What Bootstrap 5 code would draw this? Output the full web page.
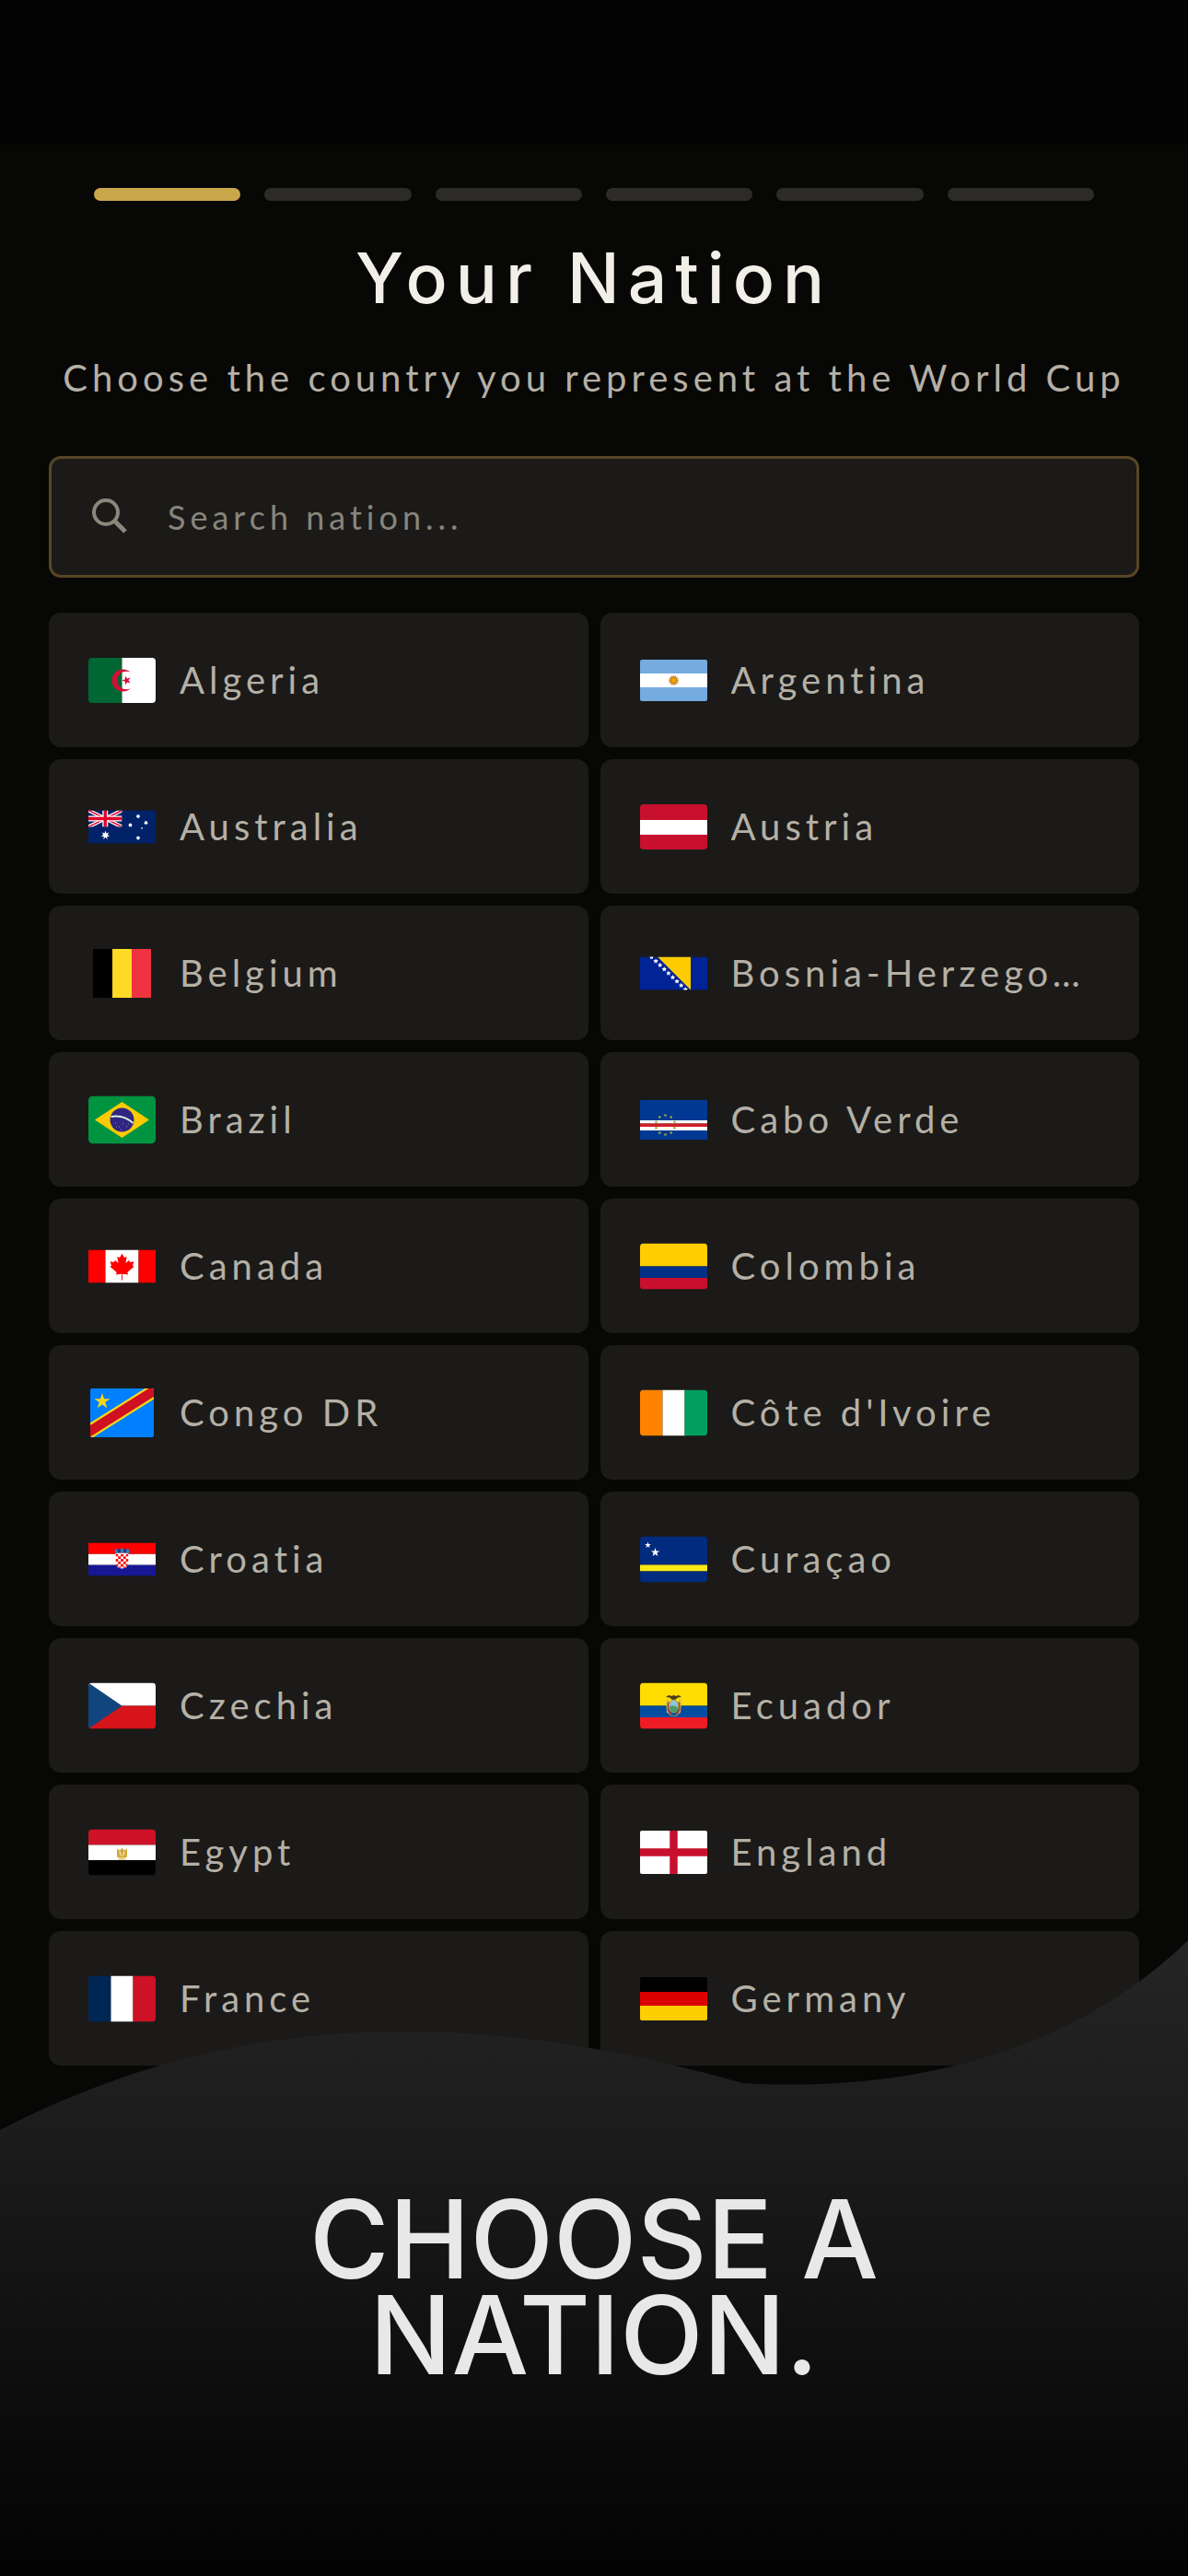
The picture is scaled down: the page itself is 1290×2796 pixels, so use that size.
<!DOCTYPE html>
<html lang="en">

<head>
    <meta charset="UTF-8">
    <meta name="viewport" content="width=device-width, initial-scale=1.0">
    <title>Your Nation</title>
    <link href="https://cdn.jsdelivr.net/npm/bootstrap@5.3.0/dist/css/bootstrap.min.css" rel="stylesheet">
    <style>
        body {
            background: #070706;
            color: #b5b0a6;
            font-family: Lato, sans-serif;
        }

        .screen {
            padding-bottom: 400px;
        }

        .status-strip {
            height: 157px;
            background: #030303;
        }

        .content {
            padding: 47px 53px 0;
        }

        .steps {
            gap: 26px;
            padding: 0 49px;
        }

        .step {
            height: 14px;
            border-radius: 7px;
            background: #2d2b28;
        }

        .step.active {
            background: #c9a84c;
        }

        .page-title {
            margin: 36px 0 0;
            color: #f2efe8;
            font: 500 75px/96px Inter, sans-serif;
            letter-spacing: 9px;
        }

        .page-text {
            margin: 32px -40px 0;
            font-size: 40px;
            line-height: 56px;
            letter-spacing: 5px;
        }

        .search {
            height: 132px;
            margin-top: 57px;
            padding: 0 42px;
            gap: 42px;
            border: 3px solid #574524;
            border-radius: 13px;
            background: #1b1a18;
        }

        .search svg {
            width: 42px;
            height: 42px;
            color: #8b877d;
        }

        .search input {
            font-size: 36px;
            letter-spacing: 5px;
            color: #b5b0a6;
        }

        .search input::placeholder {
            color: #88857c;
            opacity: 1;
        }

        .nations {
            --bs-gutter-x: 13px;
            --bs-gutter-y: 13px;
            margin-top: 25px;
        }

        .nation {
            height: 146px;
            padding: 0 43px;
            gap: 26px;
            border-radius: 13px;
            background: #1b1a18;
            color: #b5b0a6;
            font-size: 40px;
            letter-spacing: 5px;
        }

        .nation:hover {
            background: #242320;
            color: #f2efe8;
        }

        .flag {
            width: 73px;
            height: 53px;
        }

        .promo {
            padding: 278px 0 210px;
        }

        .promo-title {
            color: #e8e8e8;
            font: 500 118px/104px Inter, sans-serif;
        }
    </style>
</head>

<body>
    <div class="screen position-relative overflow-hidden min-vh-100">
        <div class="status-strip"></div>

        <main class="content">
            <div class="steps d-flex">
                <div class="step active flex-fill"></div>
                <div class="step flex-fill"></div>
                <div class="step flex-fill"></div>
                <div class="step flex-fill"></div>
                <div class="step flex-fill"></div>
                <div class="step flex-fill"></div>
            </div>

            <h1 class="page-title text-center">Your Nation</h1>
            <p class="page-text text-center">Choose the country you represent at the World Cup</p>

            <form class="search d-flex align-items-center">
                <label for="nationSearch" class="d-flex" aria-label="Search nation">
                    <svg viewBox="0 0 42 42" fill="none" stroke="currentColor" stroke-width="4">
                        <circle cx="17" cy="16" r="13" />
                        <path d="M26 25l12 12" stroke-width="5" />
                    </svg>
                </label>
                <input type="text" id="nationSearch" class="form-control border-0 bg-transparent shadow-none p-0" placeholder="Search nation...">
            </form>

            <div class="row nations" id="nationList"></div>
        </main>

        <section class="promo position-absolute bottom-0 start-0 w-100 text-center">
            <svg class="position-absolute top-0 start-0 w-100 h-100" viewBox="0 0 1290 696" preserveAspectRatio="none">
                <defs>
                    <linearGradient id="waveFill" x1="0" y1="0" x2="0" y2="1">
                        <stop offset="0" stop-color="#252526" />
                        <stop offset="0.3" stop-color="#1c1c1c" />
                        <stop offset="0.6" stop-color="#111111" />
                        <stop offset="0.85" stop-color="#080808" />
                        <stop offset="1" stop-color="#030303" />
                    </linearGradient>
                </defs>
                <path fill="url(#waveFill)" d="M0 212C260 76 530 82 806 161C960 170 1150 142 1290 6V696H0Z" />
            </svg>
            <h2 class="promo-title position-relative mb-0">CHOOSE A<br>NATION.</h2>
        </section>
    </div>

    <script src="https://cdn.jsdelivr.net/npm/bootstrap@5.3.0/dist/js/bootstrap.bundle.min.js"></script>
    <script>
        // Points of a star, for a polygon
        function star(cx, cy, r, n = 5, inner = 0.382) {
            const points = [];
            for (let i = 0; i < n * 2; i++) {
                const radius = i % 2 ? r * inner : r;
                const angle = Math.PI * i / n - Math.PI / 2;
                points.push((cx + radius * Math.cos(angle)).toFixed(2) + ',' + (cy + radius * Math.sin(angle)).toFixed(2));
            }
            return `<polygon points="${points.join(' ')}"/>`;
        }

        // Bands of [colour, size], top to bottom or left to right
        function bands(w, h, list, vertical) {
            let at = 0;
            return list.map(([color, size]) => {
                const rect = vertical
                    ? `<rect x="${at}" width="${size}" height="${h}" fill="${color}"/>`
                    : `<rect y="${at}" width="${w}" height="${size}" fill="${color}"/>`;
                at += size;
                return rect;
            }).join('');
        }

        // Circle of dots
        function ring(cx, cy, r, n, dot) {
            let out = '';
            for (let i = 0; i < n; i++) {
                const a = Math.PI * 2 * i / n - Math.PI / 2;
                out += `<circle cx="${(cx + r * Math.cos(a)).toFixed(2)}" cy="${(cy + r * Math.sin(a)).toFixed(2)}" r="${dot}"/>`;
            }
            return out;
        }

        // Red squares of the Croatian shield
        function checkers() {
            let out = '';
            for (let row = 0; row < 6; row++) {
                for (let col = 0; col < 5; col++) {
                    if ((row + col) % 2 === 0) {
                        out += `<rect x="${29.5 + col * 2.8}" y="${12 + row * 2.8}" width="2.8" height="2.8"/>`;
                    }
                }
            }
            return out;
        }

        // name, width, height, corner radius, drawing
        const nations = [
            ['Algeria', 73, 49, 4, bands(73, 49, [['#006633', 36.5], ['#fff', 36.5]], true) +
                '<path fill="#d21034" d="M46 16A12 12 0 1 0 46 33A9.8 9.8 0 1 1 46 16Z"/><g fill="#d21034" transform="rotate(-18 41.5 24.5)">' + star(41.5, 24.5, 5.2) + '</g>'],
            ['Argentina', 73, 45, 2, bands(73, 45, [['#74acdf', 15], ['#fff', 15], ['#74acdf', 15]]) +
                '<g fill="#dba05a">' + star(36.5, 22.5, 6.2, 16, 0.7) + '</g><circle cx="36.5" cy="22.5" r="3.4" fill="#f0a202" stroke="#b0620a" stroke-width=".6"/>'],
            ['Australia', 73, 36, 0, '<rect width="73" height="36" fill="#012169"/>' +
                '<svg width="36.5" height="18" viewBox="0 0 36.5 18"><path d="M0 0L36.5 18M36.5 0L0 18" stroke="#fff" stroke-width="4"/><path d="M0 0L36.5 18M36.5 0L0 18" stroke="#e4002b" stroke-width="1.5"/><path d="M18.25 0V18M0 9H36.5" stroke="#fff" stroke-width="6"/><path d="M18.25 0V18M0 9H36.5" stroke="#e4002b" stroke-width="3.4"/></svg>' +
                '<g fill="#fff">' + star(18.5, 27, 5, 7, 0.45) + star(54, 6.5, 2.4, 7, 0.6) + star(45.5, 16, 2.4, 7, 0.6) + star(62.5, 13.5, 2.4, 7, 0.6) + star(54, 30, 2.4, 7, 0.6) + star(58, 19.5, 1.4) + '</g>'],
            ['Austria', 73, 49, 4, bands(73, 49, [['#c8102e', 17], ['#fff', 16], ['#c8102e', 16]])],
            ['Belgium', 63, 53, 0, bands(63, 53, [['#000', 21], ['#fdda25', 21], ['#ef3340', 21]], true)],
            ['Bosnia-Herzegovina', 73, 36, 0, '<rect width="73" height="36" fill="#002395"/><path fill="#fecb00" d="M19 0H55V36Z"/><g fill="#fff">' +
                [0, 1, 2, 3, 4, 5, 6, 7, 8].map(i => star(12.5 + i * 4.6, 0.3 + i * 4.4, 2.8, 5, 0.5)).join('') + '</g>'],
            ['Brazil', 73, 52, 5, '<rect width="73" height="52" fill="#009440"/><path fill="#ffcb00" d="M7 26L36.5 6.5L66 26L36.5 45.5Z"/><circle cx="36.5" cy="26" r="13" fill="#302681"/><path d="M24.5 22.5Q38 20 48.5 29.5" fill="none" stroke="#d8f0e4" stroke-width="1.8"/><path fill="#8a83c0" d="M29 29h1v1h-1zM33 33h1v1h-1zM37 30h1v1h-1zM41 33h1v1h-1zM35 36h1v1h-1zM30 33h1v1h-1zM43 30h1v1h-1z"/>'],
            ['Cabo Verde', 73, 43, 1, bands(73, 43, [['#003893', 22], ['#fff', 3.5], ['#cf2027', 3.5], ['#fff', 4], ['#003893', 10]]) +
                '<g fill="#a9a83c">' + ring(27.5, 27, 10.5, 10, 1.3) + '</g>'],
            ['Canada', 73, 36, 0, bands(73, 36, [['#f00', 18.5], ['#fff', 36], ['#f00', 18.5]], true) +
                '<path fill="#f00" d="M36.5 4.3L33.9 8.6L31.3 7.4L32.5 14.6L28.8 11.3L28 13.4L23.6 12.8L25 17.3L23.4 18.3L30.7 24.4L29.9 27L36.1 26.2L36 33H37L36.9 26.2L43.1 27L42.3 24.4L49.6 18.3L48 17.3L49.4 12.8L45 13.4L44.2 11.3L40.5 14.6L41.7 7.4L39.1 8.6Z"/>'],
            ['Colombia', 73, 50, 4, bands(73, 50, [['#ffcd00', 25], ['#003087', 12.5], ['#c8102e', 12.5]])],
            ['Congo DR', 69, 53, 2, '<rect width="69" height="53" fill="#007fff"/><path d="M-6 50L75 -1" stroke="#f7d618" stroke-width="15"/><path d="M-6 50L75 -1" stroke="#ce1021" stroke-width="10.5"/><g fill="#f7d618">' + star(13, 14, 9) + '</g>'],
            ["Côte d'Ivoire", 73, 50, 4, bands(73, 50, [['#ff8200', 24.5], ['#fff', 24], ['#009f60', 24.5]], true)],
            ['Croatia', 73, 36, 0, bands(73, 36, [['#f00', 12.3], ['#fff', 11.9], ['#171796', 11.8]]) +
                '<path fill="#fff" d="M29.5 11H43.5V21Q43 27.5 36.5 28Q30 27.5 29.5 21Z"/><clipPath id="shield"><path d="M29.5 12H43.5V21Q43 27 36.5 28Q30 27 29.5 21Z"/></clipPath><g fill="#f00" clip-path="url(#shield)">' + checkers() + '</g>' +
                '<path fill="#2786b8" d="M28.5 7.5L31.5 6.5L32.5 11L29.5 12ZM34.8 6.3H38.2V11H34.8ZM41.5 6.5L44.5 7.5L43.5 12L40.5 11Z"/><path fill="#29338a" d="M31.5 7L34.8 6.5V11H32.3ZM38.2 6.5L41.5 7L40.7 11H38.2Z"/>'],
            ['Curaçao', 73, 50, 4, bands(73, 50, [['#002b7f', 31], ['#f9e814', 7], ['#002b7f', 12]]) + '<g fill="#fff">' + star(8.5, 9.5, 3.6) + star(16.5, 17.5, 5) + '</g>'],
            ['Czechia', 73, 50, 4, bands(73, 50, [['#fff', 25], ['#d7141a', 25]]) + '<path fill="#11457e" d="M0 0L36.5 25L0 50Z"/>'],
            ['Ecuador', 73, 50, 4, bands(73, 50, [['#ffdd00', 25], ['#034ea2', 12.5], ['#ed1c24', 12.5]]) +
                '<path fill="#d9c545" d="M28 19L31 17V33L34 35.5H39L42 33V17L45 19L44 32L39.5 36H33.5L29 32Z"/><path fill="#4b3a1a" d="M28 15.5L31 13.5L35 14.5L36.5 13L38 14.5L42 13.5L45 15.5L41 16L38 18.5H35L32 16Z"/><path fill="#b0433f" d="M29.5 22L31.5 20V30L34.5 34L32.5 35L29.5 30ZM43.5 22L41.5 20V30L38.5 34L40.5 35L43.5 30Z"/><ellipse cx="36.5" cy="25.5" rx="5" ry="7" fill="#8cc7dc" stroke="#b49c34"/><path fill="#4d9c62" d="M32 26Q36 23 41 27Q40.5 32 36.5 32.5Q33 32 32 26Z"/>'],
            ['Egypt', 73, 50, 4, bands(73, 50, [['#ce1126', 17], ['#fff', 16.5], ['#000', 16.5]]) +
                '<path fill="#d1ab3b" d="M31 21L34 23L35.5 21.5Q36.5 18.5 37.5 21.5L39 23L42 21V30L39.5 31L41 33H32L33.5 31L31 30Z"/><path d="M34 24L35.3 29M39 24L37.7 29M33 31.5H40" stroke="#fff" stroke-width=".9"/>'],
            ['England', 73, 47, 2, '<rect width="73" height="47" fill="#fff"/><path d="M36.5 0V47M0 23.5H73" stroke="#c8102e" stroke-width="8.5"/>'],
            ['France', 73, 50, 4, bands(73, 50, [['#002654', 24.5], ['#fff', 24], ['#ce1126', 24.5]], true)],
            ['Germany', 73, 47, 2, bands(73, 47, [['#000', 16], ['#d00', 15], ['#ffce00', 16]])]
        ];

        const list = document.getElementById('nationList');

        nations.forEach(([name, w, h, r, drawing], i) => {
            const col = document.createElement('div');
            col.className = 'col-6';
            col.innerHTML = `
                <button type="button" class="nation btn border-0 w-100 d-flex align-items-center text-start">
                    <svg class="flag flex-shrink-0" viewBox="${(w - 73) / 2} ${(h - 53) / 2} 73 53" aria-hidden="true">
                        <clipPath id="flag${i}"><rect width="${w}" height="${h}" rx="${r}"/></clipPath>
                        <g clip-path="url(#flag${i})">${drawing}</g>
                    </svg>
                    <span class="text-truncate">${name}</span>
                </button>`;
            list.appendChild(col);
        });

        // Filter the list while typing
        document.getElementById('nationSearch').addEventListener('input', (e) => {
            const query = e.target.value.toLowerCase();
            nations.forEach(([name], i) => {
                list.children[i].classList.toggle('d-none', !name.toLowerCase().includes(query));
            });
        });
    </script>
</body>

</html>
